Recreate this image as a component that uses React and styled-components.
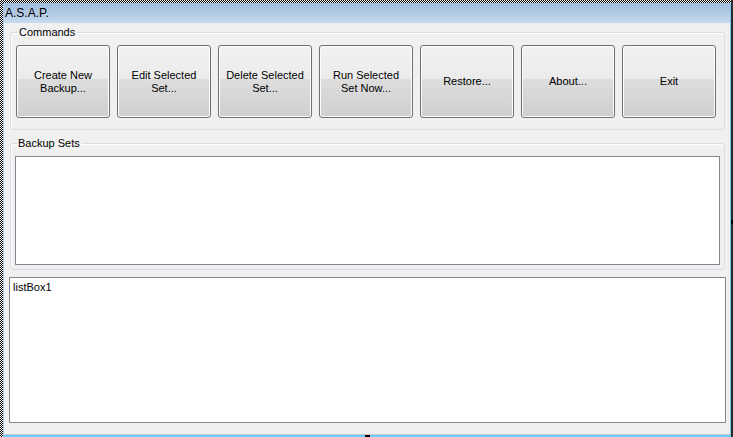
import React from "react";
import styled, { createGlobalStyle } from "styled-components";

const Global = createGlobalStyle`
  html, body { margin: 0; padding: 0; background: #fff; }
  body { font-family: "Liberation Sans", Arial, sans-serif; font-size: 11px; color: #000; }
  * { box-sizing: border-box; }
`;

const Stage = styled.div`
  position: relative;
  width: 733px;
  height: 437px;
  padding: 3px 0 0 3px;
  border-right: 2px solid #2b2b2b;
  background: repeating-conic-gradient(#000 0 25%, #fff 0 50%) 0 0 / 2px 2px;
  display: flex;
`;

const Window = styled.div`
  flex: 1;
  display: flex;
  flex-direction: column;
  border-left: 1px solid #a7c6e6;
  border-right: 1px solid #79c6ee;
  border-bottom: 2px solid #66d0fb;
  background: #f0f0f0;
`;

const TitleBar = styled.div`
  height: 20px;
  flex: none;
  padding: 0 0 0 1px;
  display: flex;
  align-items: center;
  font-size: 12px;
  background: linear-gradient(#9fbadb, #c7daef);
`;

const Body = styled.div`
  flex: 1;
  display: flex;
  flex-direction: column;
  padding: 3px 4px 0 6px;
  border-bottom: 1px solid #c9c9c9;
`;

const Group = styled.fieldset`
  margin: ${p => p.$top}px 1px 0 0;
  padding: ${p => p.$pad};
  border: 1px solid #d5dfe5;
  border-radius: 3px;
  box-shadow: inset 1px 1px 0 #fff;
  min-width: 0;
`;

const Legend = styled.legend`
  margin-left: 2px;
  padding: 0 2px 0 1px;
  line-height: 13px;
  font-size: 11px;
`;

const ButtonRow = styled.div`
  display: flex;
  gap: 7px;
`;

const Button = styled.button`
  width: 94px;
  height: 73px;
  padding: 0;
  border: 1px solid #707070;
  border-radius: 3px;
  font-family: "Liberation Sans", Arial, sans-serif;
  font-size: 11px;
  font-weight: 400;
  line-height: 13px;
  color: #000;
  white-space: pre-line;
  box-shadow: inset 0 0 0 1px #fcfcfc;
  background: linear-gradient(#f2f2f2 0%, #ebebeb 46%, #dddddd 47%, #cfcfcf 100%);
`;

const ListArea = styled.div`
  height: ${p => p.$h}px;
  background: #fff;
  border: 1px solid #828790;
`;

const ListBox = styled.div`
  flex: 1;
  margin: 7px 0 11px -1px;
  background: #fff;
  border: 1px solid #828790;
  padding: 3px 3px;
  line-height: 13px;
`;

const Handle = styled.div`
  position: absolute;
  background: #000;
  border: 1px solid #000;
  ${p => p.$pos}
`;

const buttons = [
  "Create New\nBackup...",
  "Edit Selected\nSet...",
  "Delete Selected\nSet...",
  "Run Selected\nSet Now...",
  "Restore...",
  "About...",
  "Exit",
];

export default function App() {
  return (
    <>
      <Global />
      <Stage>
        <Window>
          <TitleBar>A.S.A.P.</TitleBar>
          <Body>
            <Group $top={0} $pad="6px 5px 11px 5px">
              <Legend>Commands</Legend>
              <ButtonRow>
                {buttons.map(b => (
                  <Button key={b}>{b}</Button>
                ))}
              </ButtonRow>
            </Group>
            <Group $top={7} $pad="6px 4px 4px 4px">
              <Legend>Backup Sets</Legend>
              <ListArea $h={109} />
            </Group>
            <ListBox>listBox1</ListBox>
          </Body>
        </Window>
        <Handle $pos="right: -2px; top: 220px; width: 2px; height: 4px; background: #fff;" />
        <Handle $pos="left: 365px; bottom: 0; width: 5px; height: 2px;" />
      </Stage>
    </>
  );
}
